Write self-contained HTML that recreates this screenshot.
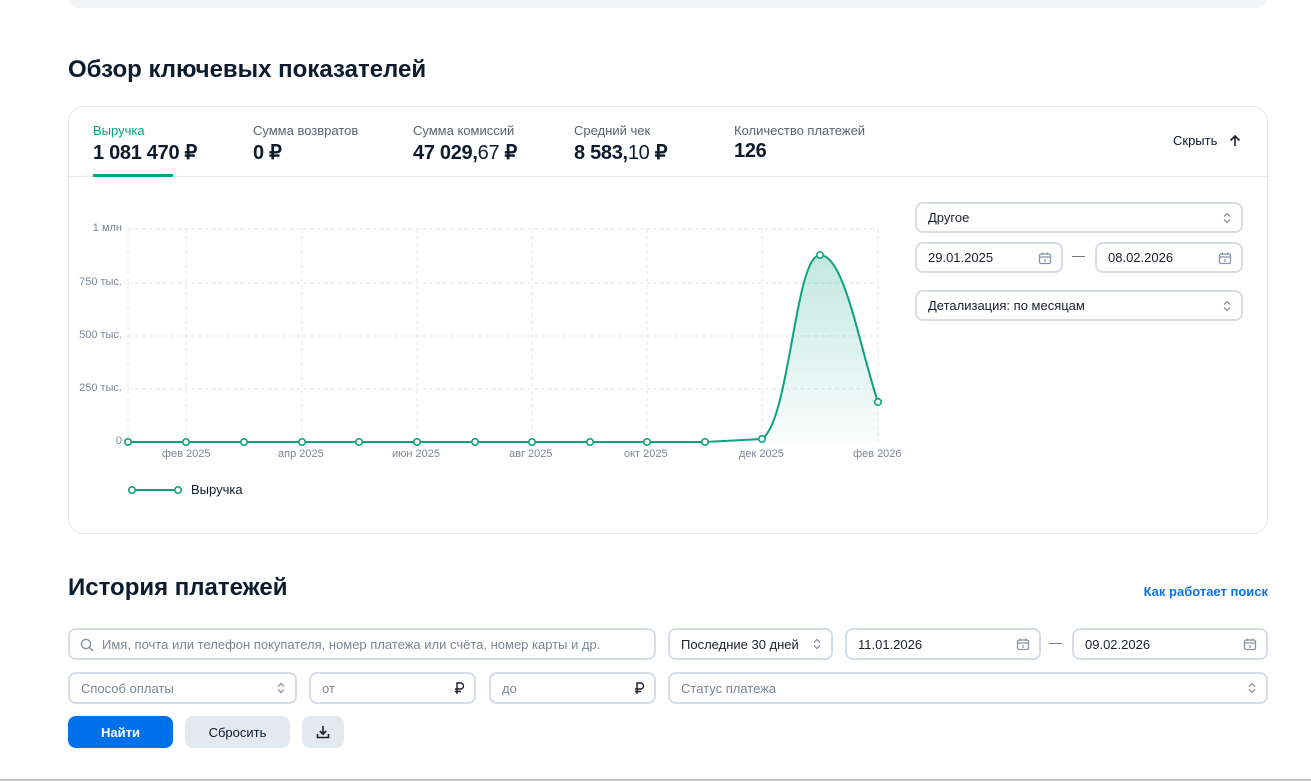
<!DOCTYPE html><html><head><meta charset="utf-8"><style>
*{box-sizing:border-box;margin:0;padding:0}
body{width:1311px;height:781px;background:#fff;font-family:"Liberation Sans",sans-serif;color:#0d1b2e;position:relative;overflow:hidden}
.a{position:absolute}
.inp{position:absolute;border:2px solid #d6dce8;border-radius:8px;background:#fff;font-size:13px;display:flex;align-items:center;padding-left:11px;color:#1a1f29}
.ph{color:#7c8594}
.ic{position:absolute;right:9px;top:50%;transform:translateY(-50%)}
.tl{font-size:13px;color:#5a6270}
.tv{font-size:20px;font-weight:bold;color:#0d1b2e;margin-top:2px;letter-spacing:-0.3px}
.yl{position:absolute;font-size:11px;color:#7c8594;text-align:right;width:60px;left:62px}
.xl{position:absolute;font-size:11px;color:#7c8594;top:448px}
</style></head><body>
<div class="a" style="left:68px;top:-10px;width:1199px;height:18px;background:#f4f5f7;border-radius:0 0 10px 10px"></div>
<div class="a" style="left:68px;top:56px;font-size:24px;font-weight:bold">Обзор ключевых показателей</div>
<div class="a" style="left:68px;top:106px;width:1200px;height:428px;border:1px solid #e6e9ef;border-radius:16px"></div>
<div class="a" style="left:69px;top:176px;width:1198px;height:1px;background:#e6e9ef"></div>
<div class="a" style="left:93px;top:123px"><div class="tl" style="color:#0aa37f">Выручка</div><div class="tv">1 081 470 ₽</div></div>
<div class="a" style="left:93px;top:174px;width:80px;height:3px;background:#0aa37f"></div>
<div class="a" style="left:253px;top:123px"><div class="tl">Сумма возвратов</div><div class="tv">0 ₽</div></div>
<div class="a" style="left:413px;top:123px"><div class="tl">Сумма комиссий</div><div class="tv">47 029,<span style="font-weight:normal">67</span> ₽</div></div>
<div class="a" style="left:574px;top:123px"><div class="tl">Средний чек</div><div class="tv">8 583,<span style="font-weight:normal">10</span> ₽</div></div>
<div class="a" style="left:734px;top:123px"><div class="tl">Количество платежей</div><div class="tv">126</div></div>
<div class="a" style="left:1173px;top:133px;font-size:13px">Скрыть</div>
<svg class="a" style="left:1228px;top:134px" width="14" height="14" viewBox="0 0 14 14"><path d="M7 12V2M2.5 6.5 7 2l4.5 4.5" fill="none" stroke="#1a1f29" stroke-width="1.6"/></svg>

<svg class="a" style="left:0;top:0" width="910" height="520">
<defs><linearGradient id="g" x1="0" y1="0" x2="0" y2="1"><stop offset="0" stop-color="#0aa37f" stop-opacity=".25"/><stop offset="1" stop-color="#0aa37f" stop-opacity=".02"/></linearGradient></defs>
<g stroke="#e4e6ea" stroke-dasharray="4 3" stroke-width="1">
<line x1="128" y1="229" x2="878" y2="229"/><line x1="128" y1="283" x2="878" y2="283"/><line x1="128" y1="336" x2="878" y2="336"/><line x1="128" y1="389" x2="878" y2="389"/>
<line x1="128" y1="229" x2="128" y2="442"/><line x1="186" y1="229" x2="186" y2="442"/><line x1="302" y1="229" x2="302" y2="442"/><line x1="417" y1="229" x2="417" y2="442"/><line x1="532" y1="229" x2="532" y2="442"/><line x1="647" y1="229" x2="647" y2="442"/><line x1="762" y1="229" x2="762" y2="442"/><line x1="878" y1="229" x2="878" y2="442"/>
</g>
<path d="M705 442 L762 439 C790 420 795 255 820 255 C845 255 860 350 878 402 L878 442 Z" fill="url(#g)"/>
<path d="M128 442 L705 442 L762 439 C790 420 795 255 820 255 C845 255 860 350 878 402" fill="none" stroke="#0aa37f" stroke-width="2"/>
<g fill="#fff" stroke="#0aa37f" stroke-width="1.6">
<circle cx="128" cy="442" r="3.2"/><circle cx="186" cy="442" r="3.2"/><circle cx="244" cy="442" r="3.2"/><circle cx="302" cy="442" r="3.2"/><circle cx="359" cy="442" r="3.2"/><circle cx="417" cy="442" r="3.2"/><circle cx="475" cy="442" r="3.2"/><circle cx="532" cy="442" r="3.2"/><circle cx="590" cy="442" r="3.2"/><circle cx="647" cy="442" r="3.2"/><circle cx="705" cy="442" r="3.2"/><circle cx="762" cy="439" r="3.2"/><circle cx="820" cy="255" r="3.2"/><circle cx="878" cy="402" r="3.2"/>
</g>
<line x1="130" y1="490" x2="180" y2="490" stroke="#0aa37f" stroke-width="2"/>
<circle cx="132" cy="490" r="3.2" fill="#fff" stroke="#0aa37f" stroke-width="1.6"/><circle cx="178" cy="490" r="3.2" fill="#fff" stroke="#0aa37f" stroke-width="1.6"/>
</svg>
<div class="yl" style="top:222px">1 млн</div><div class="yl" style="top:276px">750 тыс.</div><div class="yl" style="top:329px">500 тыс.</div><div class="yl" style="top:382px">250 тыс.</div><div class="yl" style="top:435px">0</div>
<div class="xl" style="left:162px">фев 2025</div><div class="xl" style="left:278px">апр 2025</div><div class="xl" style="left:392px">июн 2025</div><div class="xl" style="left:509px">авг 2025</div><div class="xl" style="left:624px">окт 2025</div><div class="xl" style="left:739px">дек 2025</div><div class="xl" style="left:853px">фев 2026</div>
<div class="a" style="left:191px;top:482px;font-size:13px">Выручка</div>

<svg width="0" height="0" style="position:absolute"><defs>
<symbol id="ch" viewBox="0 0 10 14"><path d="M2 5.5 5 2.5 8 5.5M2 8.5 5 11.5 8 8.5" fill="none" stroke="#8a93a3" stroke-width="1.3"/></symbol>
<symbol id="cal" viewBox="0 0 14 14"><rect x="1.5" y="3" width="11" height="9.5" rx="1.5" fill="none" stroke="#8a93a3" stroke-width="1.3"/><path d="M1.5 6h11M4.5 1.5v2.5M9.5 1.5v2.5M7 8v3" stroke="#8a93a3" stroke-width="1.2"/></symbol>
<symbol id="rub" viewBox="0 0 12 14"><path d="M4 13V2h3.5a3 3 0 0 1 0 6H2M2 10.5h6" fill="none" stroke="#1a1f29" stroke-width="1.4"/></symbol>
</defs></svg>

<div class="inp" style="left:915px;top:202px;width:328px;height:31px">Другое<svg class="ic" width="10" height="14"><use href="#ch"/></svg></div>
<div class="inp" style="left:915px;top:242px;width:148px;height:31px">29.01.2025<svg class="ic" width="14" height="14"><use href="#cal"/></svg></div>
<div class="a" style="left:1072px;top:248px;font-size:13px;color:#5a6270">—</div>
<div class="inp" style="left:1095px;top:242px;width:148px;height:31px">08.02.2026<svg class="ic" width="14" height="14"><use href="#cal"/></svg></div>
<div class="inp" style="left:915px;top:290px;width:328px;height:31px">Детализация: по месяцам<svg class="ic" width="10" height="14"><use href="#ch"/></svg></div>

<div class="a" style="left:68px;top:574px;font-size:24px;font-weight:bold">История платежей</div>
<div class="a" style="right:43px;top:584px;font-size:13px;font-weight:bold;color:#0a72e8">Как работает поиск</div>

<div class="inp ph" style="left:68px;top:628px;width:588px;height:32px;padding-left:32px"><svg class="a" style="left:10px;top:8px" width="14" height="14" viewBox="0 0 14 14"><circle cx="6" cy="6" r="4.6" fill="none" stroke="#8a93a3" stroke-width="1.4"/><path d="M9.5 9.5 13 13" stroke="#8a93a3" stroke-width="1.4"/></svg>Имя, почта или телефон покупателя, номер платежа или счёта, номер карты и др.</div>
<div class="inp" style="left:668px;top:628px;width:165px;height:32px">Последние 30 дней<svg class="ic" width="10" height="14"><use href="#ch"/></svg></div>
<div class="inp" style="left:845px;top:628px;width:196px;height:32px">11.01.2026<svg class="ic" width="14" height="14"><use href="#cal"/></svg></div>
<div class="a" style="left:1049px;top:635px;font-size:13px;color:#5a6270">—</div>
<div class="inp" style="left:1072px;top:628px;width:196px;height:32px">09.02.2026<svg class="ic" width="14" height="14"><use href="#cal"/></svg></div>

<div class="inp ph" style="left:68px;top:672px;width:229px;height:32px">Способ оплаты<svg class="ic" width="10" height="14"><use href="#ch"/></svg></div>
<div class="inp ph" style="left:309px;top:672px;width:167px;height:32px">от<svg class="ic" width="12" height="14"><use href="#rub"/></svg></div>
<div class="inp ph" style="left:489px;top:672px;width:167px;height:32px">до<svg class="ic" width="12" height="14"><use href="#rub"/></svg></div>
<div class="inp ph" style="left:668px;top:672px;width:600px;height:32px">Статус платежа<svg class="ic" width="10" height="14"><use href="#ch"/></svg></div>

<div class="a" style="left:68px;top:716px;width:105px;height:32px;background:#0071eb;border-radius:8px;color:#fff;font-size:13px;font-weight:bold;display:flex;align-items:center;justify-content:center">Найти</div>
<div class="a" style="left:185px;top:716px;width:105px;height:32px;background:#e4e8f0;border-radius:8px;font-size:13px;display:flex;align-items:center;justify-content:center">Сбросить</div>
<div class="a" style="left:302px;top:716px;width:42px;height:32px;background:#e4e8f0;border-radius:8px"><svg class="a" style="left:14px;top:9px" width="14" height="14" viewBox="0 0 14 14"><path d="M7 1v8M3.8 6 7 9.2 10.2 6M1.5 9v3.5h11V9" fill="none" stroke="#1a1f29" stroke-width="1.6"/></svg></div>
<div class="a" style="left:0;top:779px;width:1311px;height:2px;background:#c8c8c8"></div>
</body></html>
